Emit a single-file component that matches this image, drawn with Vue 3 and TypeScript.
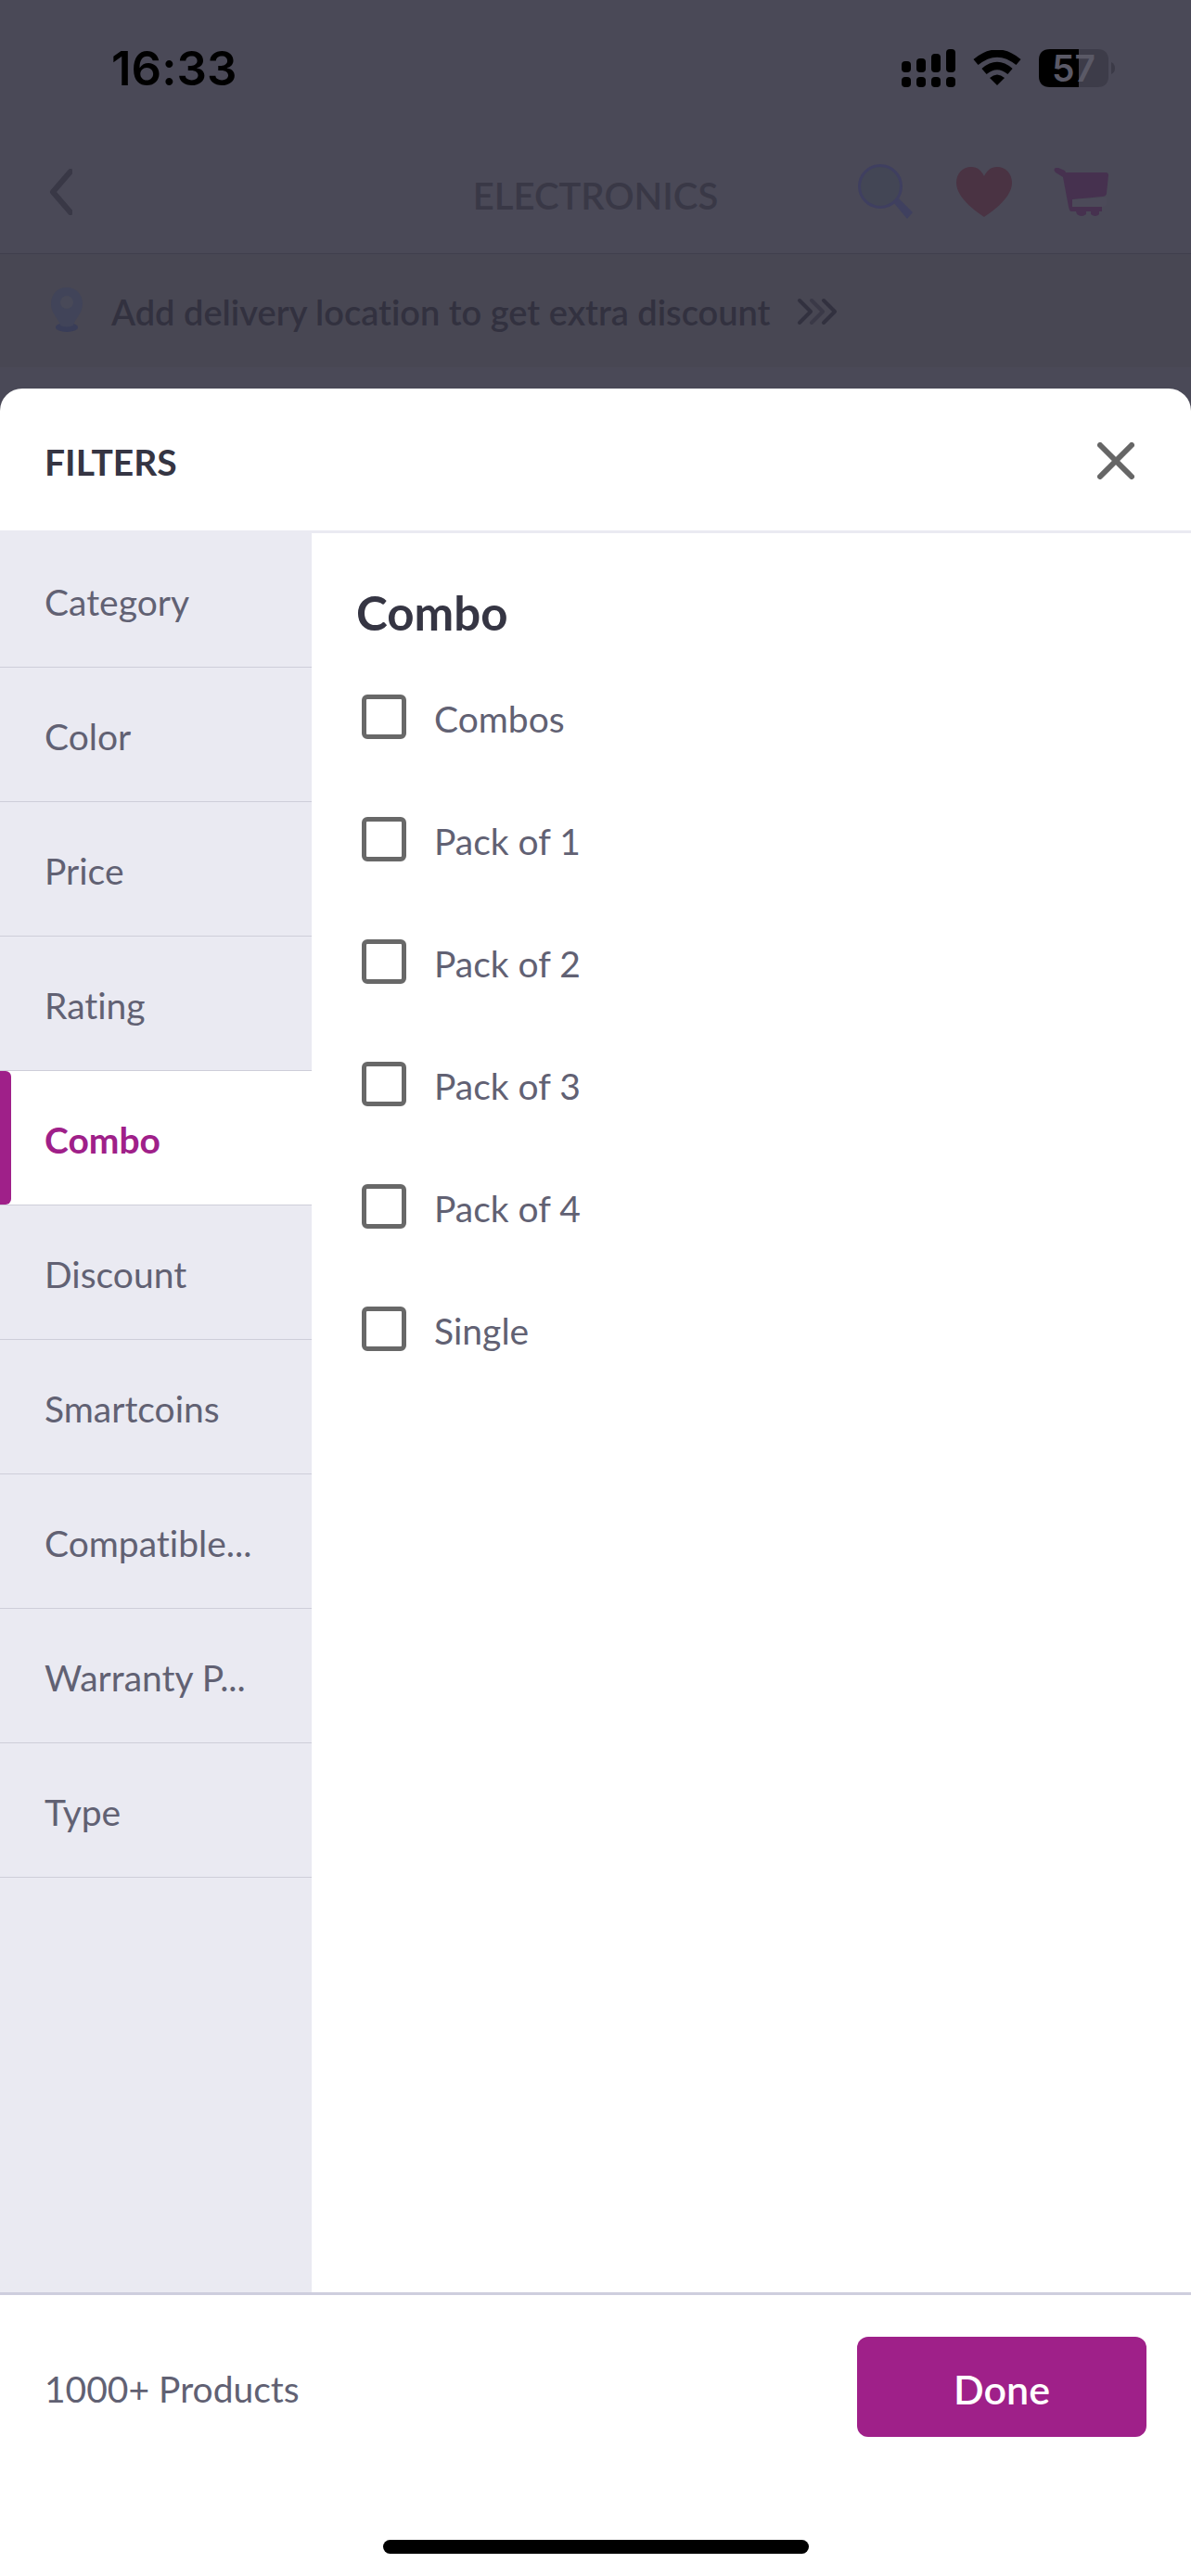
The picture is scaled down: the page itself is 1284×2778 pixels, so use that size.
<script setup lang="ts">
import { ref } from 'vue'

const categories: string[] = [
  'Category',
  'Color',
  'Price',
  'Rating',
  'Combo',
  'Discount',
  'Smartcoins',
  'Compatible...',
  'Warranty P...',
  'Type',
]
const options: string[] = ['Combos', 'Pack of 1', 'Pack of 2', 'Pack of 3', 'Pack of 4', 'Single']

const active = ref<string>('Combo')
const selected = ref<string[]>([])
</script>

<template>
  <div class="screen">
    <div class="backdrop">
      <div class="status">
        <span class="time">16:33</span>
        <div class="indicators">
          <svg class="signal" width="58" height="41" viewBox="0 0 58 41" aria-hidden="true">
            <rect x="0" y="13" width="10" height="12" rx="4" />
            <rect x="16" y="10" width="10" height="15" rx="4" />
            <rect x="32" y="5" width="10" height="20" rx="4" />
            <rect x="48" y="0" width="10" height="25" rx="4" />
            <rect x="0" y="30" width="10" height="11" rx="4" />
            <rect x="16" y="30" width="10" height="11" rx="4" />
            <rect x="32" y="30" width="10" height="11" rx="4" />
            <rect x="48" y="30" width="10" height="11" rx="4" />
          </svg>
          <svg class="wifi" width="52" height="38" viewBox="0 0 52 38" aria-hidden="true">
            <path d="M3 13Q26 -6 49 13" fill="none" stroke="#000" stroke-width="8" />
            <path d="M12 23Q26 11 40 23" fill="none" stroke="#000" stroke-width="8" />
            <path d="M18 30Q26 23 34 30L26 38Z" />
          </svg>
          <div class="battery">
            <svg width="82" height="41" viewBox="0 0 82 41" aria-hidden="true">
              <path d="M12 0H43V41H12Q0 41 0 29V12Q0 0 12 0Z" fill="#000" />
              <path d="M43 0H63Q75 0 75 12V29Q75 41 63 41H43Z" fill="#3d3c49" />
              <path d="M78 14Q82 16 82 20.500T78 27Z" fill="#3b3a47" />
            </svg>
            <span class="level">57</span>
          </div>
        </div>
      </div>

      <header class="topbar">
        <button class="icon-btn back" type="button" aria-label="Back">
          <svg width="28" height="50" viewBox="0 0 28 50" aria-hidden="true">
            <path d="M26 3L7 25L26 47" fill="none" stroke="#393846" stroke-width="6" stroke-linecap="round" stroke-linejoin="round" />
          </svg>
        </button>
        <h1 class="page-title">ELECTRONICS</h1>
        <div class="actions">
          <button class="icon-btn" type="button" aria-label="Search">
            <svg width="62" height="62" viewBox="0 0 62 62" aria-hidden="true">
              <path d="M39 42L44 37L60 53L54 60Z" fill="#3f405f" />
              <circle cx="25" cy="25" r="22.500" fill="#434655" stroke="#3f3f60" stroke-width="3" />
            </svg>
          </button>
          <button class="icon-btn" type="button" aria-label="Wishlist">
            <svg width="62" height="56" viewBox="0 0 62 56" aria-hidden="true">
              <path d="M31 55C27 52 1 36 1 18C1 8 8 1 17 1C24 1 28 5 31 11C34 5 38 1 45 1C54 1 61 8 61 18C61 36 35 52 31 55Z" fill="#4a3343" />
            </svg>
          </button>
          <button class="icon-btn" type="button" aria-label="Cart">
            <svg width="60" height="54" viewBox="0 0 60 54" aria-hidden="true">
              <path d="M13 6H56Q59 6 59 9L57 28Q57 32 52 32L21 35L21 43H52V48H49V51Q45 55 40 51V48H35V51Q30 55 25 51L24 48H19Q17 48 16 43L10 11L2 6Q-1 3 2 1L5 1L12 4Z" fill="#46314f" />
              <path d="M20 35L57 33V40Q57 43 53 43H20Z" fill="#4c4a59" />
            </svg>
          </button>
        </div>
      </header>

      <a class="location" href="#">
        <svg width="40" height="52" viewBox="0 0 40 52" aria-hidden="true">
          <ellipse cx="20" cy="44" rx="12" ry="5" fill="#393d58" />
          <path d="M20 1C30 1 37 8 37 19C37 29 28 36 27 42Q20 45 13 42C12 36 3 29 3 19C3 8 10 1 20 1Z" fill="#414459" />
          <circle cx="20" cy="17" r="7" fill="#484958" />
        </svg>
        <span class="location-text">
          Add delivery location to get extra discount
          <svg width="44" height="32" viewBox="0 0 44 32" fill="none" stroke-width="4" stroke-linecap="round" stroke-linejoin="round" aria-hidden="true">
            <path d="M16 4L28 16L16 28" stroke="#3a3947" />
            <path d="M3 4L15 16L3 28" stroke="#32313f" />
            <path d="M29 4L41 16L29 28" stroke="#32313f" />
          </svg>
        </span>
      </a>
    </div>

    <section class="sheet" aria-label="Filters">
      <header class="sheet-head">
        <h2>FILTERS</h2>
        <button class="icon-btn" type="button" aria-label="Close">
          <svg width="40" height="40" viewBox="0 0 40 40" aria-hidden="true">
            <path d="M3 3L37 37M37 3L3 37" fill="none" stroke="#666" stroke-width="6" stroke-linecap="round" />
          </svg>
        </button>
      </header>

      <div class="body">
        <nav class="tabs">
          <button
            v-for="name in categories"
            :key="name"
            type="button"
            class="tab"
            :class="{ active: name === active }"
            @click="active = name"
          >
            {{ name }}
          </button>
        </nav>
        <div class="panel">
          <h3>Combo</h3>
          <label v-for="option in options" :key="option" class="option">
            <input v-model="selected" type="checkbox" :value="option" />
            <span class="option-name">{{ option }}</span>
          </label>
        </div>
      </div>

      <footer class="foot">
        <div class="foot-row">
          <span class="count">1000+ Products</span>
          <button class="done" type="button">Done</button>
        </div>
        <div class="home-bar"></div>
      </footer>
    </section>
  </div>
</template>

<style>
body {
  margin: 0;
  background: #4a4957;
}
</style>

<style scoped>
.screen {
  min-height: 100vh;
  display: flex;
  flex-direction: column;
  font-family: Lato, 'Open Sans', sans-serif;
  font-size: 39px;
  line-height: 48px;
  font-variant-ligatures: none;
  color: #616173;
  background: #4a4957;
}
button {
  font: inherit;
  font-variant-ligatures: none;
  color: inherit;
  border: 0;
  padding: 0;
  background: none;
}
svg {
  display: block;
}
h1,
h2,
h3 {
  margin: 0;
}
.status {
  height: 144px;
  padding: 0 82px 0 120px;
  box-sizing: border-box;
  display: flex;
  align-items: center;
  justify-content: space-between;
  color: #000;
  font-family: Inter, sans-serif;
  font-weight: 600;
}
.time {
  padding-top: 4px;
  font-size: 51px;
}
.indicators {
  padding-top: 2px;
  display: flex;
  align-items: center;
  gap: 19px;
}
.battery {
  position: relative;
}
.level {
  position: absolute;
  top: 0;
  left: 0;
  width: 75px;
  font-size: 39px;
  line-height: 41px;
  text-align: center;
  color: #5a5966;
}
.topbar {
  height: 130px;
  box-sizing: border-box;
  padding: 0 50px 4px;
  display: grid;
  grid-template-columns: 1fr auto 1fr;
  align-items: center;
  border-bottom: 1px solid #403f4d;
}
.back {
  justify-self: start;
}
.page-title {
  padding-top: 8px;
  font-size: 40px;
  line-height: 48px;
  font-weight: 600;
  color: #393846;
}
.actions {
  margin-right: 38px;
  display: flex;
  align-items: center;
  justify-content: flex-end;
  gap: 44px;
}
.location {
  height: 122px;
  box-sizing: border-box;
  padding: 0 52px;
  display: flex;
  align-items: center;
  gap: 28px;
  color: #32313f;
  background: #484753;
  font-size: 38px;
  font-weight: 600;
  text-decoration: none;
}
.location-text {
  padding-top: 2px;
  display: flex;
  align-items: center;
  gap: 28px;
}
.sheet {
  flex: 1;
  margin-top: 23px;
  display: flex;
  flex-direction: column;
  background: #fff;
  border-radius: 24px 24px 0 0;
}
.sheet-head {
  height: 156px;
  box-sizing: border-box;
  padding: 2px 61px 0 48px;
  display: flex;
  align-items: center;
  justify-content: space-between;
  border-bottom: 3px solid #eaeaf2;
}
h2 {
  padding-top: 2px;
  font-size: 39px;
  line-height: 48px;
  font-weight: 700;
  color: #353543;
}
.body {
  flex: 1;
  display: flex;
}
.tabs {
  width: 336px;
  display: flex;
  flex-direction: column;
  background: #eaeaf2;
}
.tab {
  height: 145px;
  padding: 4px 0 0 48px;
  border-bottom: 1px solid #ceced9;
  text-align: left;
  position: relative;
}
.tab.active {
  background: #fff;
  color: #9f2089;
  font-weight: 700;
}
.tab.active::before {
  content: '';
  position: absolute;
  left: 0;
  top: 0;
  width: 12px;
  height: 100%;
  border-radius: 0 6px 6px 0;
  background: #9f2089;
}
.panel {
  flex: 1;
  padding: 56px 48px;
}
h3 {
  font-size: 51px;
  line-height: 60px;
  font-weight: 700;
  color: #353543;
  margin-bottom: 16px;
}
.option {
  height: 132px;
  padding-left: 6px;
  display: flex;
  align-items: center;
  gap: 30px;
}
.option input {
  appearance: none;
  width: 48px;
  height: 48px;
  margin: 0;
  box-sizing: border-box;
  border: 5px solid #686868;
  border-radius: 6px;
}
.option input:checked {
  background: #9f2089;
  border-color: #9f2089;
}
.option-name,
.count {
  padding-top: 4px;
}
.foot {
  border-top: 3px solid #cecede;
  padding: 45px 48px 24px;
}
.foot-row {
  display: flex;
  align-items: center;
  justify-content: space-between;
}
.done {
  width: 312px;
  height: 108px;
  padding-top: 6px;
  border-radius: 12px;
  background: #9f2089;
  color: #fff;
  font-size: 43px;
  font-weight: 600;
}
.home-bar {
  width: 459px;
  height: 15px;
  margin: 111px auto 0;
  border-radius: 8px;
  background: #000;
}
</style>
